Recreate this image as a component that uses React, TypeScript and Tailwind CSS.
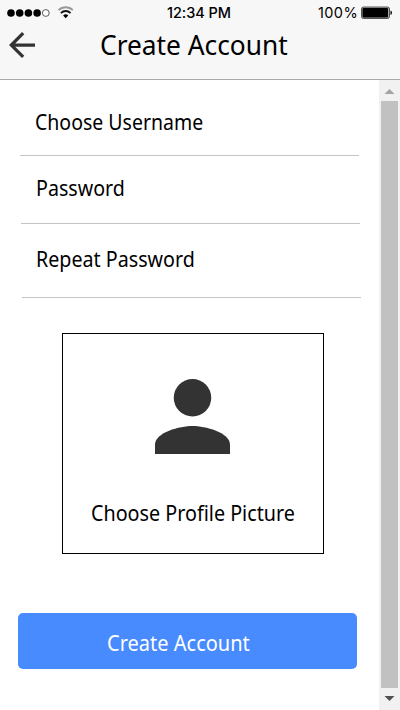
import React from "react";

const LABEL = "block w-max origin-left whitespace-nowrap text-[21px] leading-[28px]";

function StatusBar() {
  return (
    <div className="flex h-[25px] items-center font-['Inter','Liberation_Sans',sans-serif]">
      <svg width="80" height="25" viewBox="0 0 80 25">
        {[11, 19.7, 28.4, 37.1].map((x) => (
          <circle key={x} cx={x} cy="13" r="3.8" fill="#000" />
        ))}
        <circle cx="45.8" cy="13" r="3.4" fill="#fff" stroke="#333" strokeWidth="0.8" />
        <path d="M58.6 10.2a10 10 0 0 1 14.2 0" fill="none" stroke="#999" strokeWidth="1.9" />
        <path d="M60.9 13.1a6.7 6.7 0 0 1 9.6 0" fill="none" stroke="#111" strokeWidth="1.9" />
        <path d="M63.1 15.5a3.6 3.6 0 0 1 5.2 0l-2.6 2.7z" fill="#000" />
      </svg>
      <span className="ml-[87px] w-[66px] whitespace-nowrap text-[14.5px] font-medium leading-[25px] tracking-[-0.05px]">12:34 PM</span>
      <span className="ml-[85px] w-[41px] whitespace-nowrap text-[14.5px] leading-[25px] tracking-[0.4px]">100%</span>
      <svg className="ml-[1px]" width="34" height="25" viewBox="0 0 34 25">
        <rect x="1.5" y="7" width="28" height="11.5" rx="2" fill="#aaa" stroke="#333" strokeWidth="0.8" />
        <rect x="2.5" y="8" width="25.5" height="9.5" rx="1" fill="#000" />
        <path d="M30.5 10.6q1.5.5 1.5 2.2t-1.5 2.2z" fill="#000" />
      </svg>
    </div>
  );
}

function Header() {
  return (
    <header className="h-20 border-b border-[#a8a8a8] bg-[#f7f7f7]">
      <StatusBar />
      <div className="flex h-[40px] items-center">
        <svg className="ml-[9px] shrink-0" width="26" height="26" viewBox="4 4 16 16" fill="#333">
          <path d="M20 11H7.83l5.59-5.59L12 4l-8 8 8 8 1.41-1.41L7.83 13H20v-2z" />
        </svg>
        <h1 className="ml-[65px] origin-left scale-x-[0.993] whitespace-nowrap text-[26.5px] leading-[40px]">Create Account</h1>
      </div>
    </header>
  );
}

function Scrollbar() {
  return (
    <div className="flex w-[21px] flex-col items-center bg-[#f1f1f1]">
      <svg width="21" height="21" viewBox="0 0 21 21">
        <path d="M5.5 14h10l-5-5z" fill="#a3a3a3" />
      </svg>
      <div className="h-[587px] w-[17px] bg-[#c1c1c1]" />
      <svg width="21" height="22" viewBox="0 0 21 22">
        <path d="M5.5 8h10l-5 5z" fill="#505050" />
      </svg>
    </div>
  );
}

export default function App() {
  return (
    <div className="h-[710px] w-[400px] overflow-hidden bg-white font-['Noto_Sans','Open_Sans',sans-serif] text-black">
      <Header />
      <div className="flex h-[630px]">
        <main className="w-[379px]">
          <div className="ml-[20px] h-[76px] w-[339px] border-b border-[#c4c4c4] pl-[15px] pt-[28px]">
            <span className={`${LABEL} scale-x-[0.928]`}>Choose Username</span>
          </div>
          <div className="ml-[21px] h-[68px] w-[339px] border-b border-[#c4c4c4] pl-[15px] pt-[18px]">
            <span className={`${LABEL} scale-x-[0.935]`}>Password</span>
          </div>
          <div className="ml-[22px] h-[74px] w-[339px] border-b border-[#c4c4c4] pl-[14px] pt-[21px]">
            <span className={`${LABEL} scale-x-[0.937]`}>Repeat Password</span>
          </div>
          <div className="ml-[62px] mt-[35px] h-[221px] w-[262px] border border-black pt-[45px]">
            <svg className="ml-[92px] block" width="75" height="75" viewBox="4 4 16 16" fill="#333">
              <circle cx="12" cy="8" r="4" />
              <path d="M12 14c-2.67 0-8 1.34-8 4v2h16v-2c0-2.66-5.33-4-8-4z" />
            </svg>
            <div className="ml-[28px] mt-[45px]">
              <span className={`${LABEL} scale-x-[0.94]`}>Choose Profile Picture</span>
            </div>
          </div>
          <button className="ml-[18px] mt-[59px] block h-[56px] w-[339px] rounded-[5px] bg-[#488bff] pl-[89px] pt-[3px] text-left text-white">
            <span className={`${LABEL} scale-x-[0.953]`}>Create Account</span>
          </button>
        </main>
        <Scrollbar />
      </div>
    </div>
  );
}
